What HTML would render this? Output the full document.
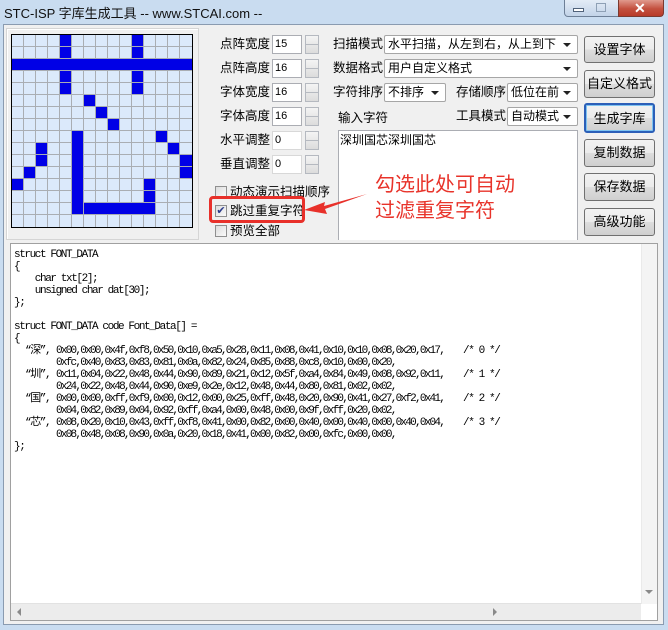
<!DOCTYPE html>
<html><head><meta charset="utf-8"><style>
*{margin:0;padding:0;box-sizing:border-box}
body{width:668px;height:630px;overflow:hidden;background:#c9dcf0;font-family:"Liberation Sans","Noto Sans CJK SC",sans-serif;font-size:12px;color:#000;position:relative}
.a{position:absolute}
.title{left:4px;top:3px;font-size:13px;color:#111}
.client{left:3px;top:24px;width:661px;height:601px;background:#f0f0f0;border:1px solid #8a9bb0}
.lbl{position:absolute;font-size:12.5px;white-space:nowrap;line-height:18px}
.inp{position:absolute;background:#fff;border:1px solid #abadb3;font-size:11px;padding-left:2px;line-height:16px;height:19px}
.spin{position:absolute;width:14px;height:19px;border:1px solid #b5b9c0;background:linear-gradient(#f4f4f4,#dcdcdc)}
.spin:after{content:"";position:absolute;left:0;right:0;top:8px;border-top:1px solid #b5b9c0}
.combo{position:absolute;background:#fff;border:1px solid #a6a6a6;height:19px;font-size:12px;line-height:17px;padding-left:3px;white-space:nowrap;border-radius:2px;overflow:hidden}
.combo:after{content:"";position:absolute;right:6px;top:7px;border-left:4px solid transparent;border-right:4px solid transparent;border-top:4px solid #222}
.btn{position:absolute;left:584px;width:71px;border:1px solid #707070;border-radius:3px;background:linear-gradient(#f2f2f2 0,#ebebeb 50%,#dddddd 51%,#cfcfcf 100%);font-size:13px;text-align:center}
.cb{position:absolute;width:12px;height:12px;border:1px solid #8f8f8f;background:linear-gradient(135deg,#dcdcdc,#fafafa)}
.code{left:10px;top:243px;width:648px;height:378px;background:#fff;border:1px solid #a0a0a0;overflow:hidden}
.ln{position:absolute;white-space:pre;font-family:"Liberation Mono","Noto Sans CJK SC",monospace;font-size:11px;line-height:12px;letter-spacing:-1.4px}
.hx{letter-spacing:-1.75px}
</style></head><body>
<div class="a title">STC-ISP 字库生成工具 -- www.STCAI.com --</div>
<div class="a" style="left:564px;top:0;width:55px;height:17px;border:1px solid #6d7f96;border-top:none;border-radius:0 0 0 4px;background:linear-gradient(#e3ecf6,#c2d3e8)"></div>
<div class="a" style="left:573px;top:8px;width:11px;height:4px;background:#fff;border:1px solid #50627a"></div>
<div class="a" style="left:596px;top:3px;width:10px;height:9px;border:1px solid #8ea0b5"></div>
<div class="a" style="left:618px;top:0;width:46px;height:17px;border:1px solid #7a3a30;border-top:none;border-radius:0 0 4px 0;background:linear-gradient(#e09a8e,#c3503e 55%,#b83a28)"></div>
<div class="a" style="left:634px;top:0px;color:#fff;font-weight:bold;font-size:14px">✕</div>
<div class="a client"></div>
<div class="a" style="left:6px;top:28px;width:193px;height:212px;border:1px solid #d5d5d5;box-shadow:inset 1px 1px 0 #fff"></div>
<svg class="a" style="left:11px;top:34px" width="182" height="194">
<rect x="0.5" y="0.5" width="181" height="193" fill="#dbe9fb" stroke="#000"/>
<g stroke="#a9adb3" stroke-width="1">
<path d="M12.5 1V193M24.5 1V193M36.5 1V193M48.5 1V193M60.5 1V193M72.5 1V193M84.5 1V193M96.5 1V193M108.5 1V193M120.5 1V193M132.5 1V193M144.5 1V193M156.5 1V193M168.5 1V193"/>
<path d="M1 12.5H181M1 24.5H181M1 36.5H181M1 48.5H181M1 60.5H181M1 72.5H181M1 84.5H181M1 96.5H181M1 108.5H181M1 120.5H181M1 132.5H181M1 144.5H181M1 156.5H181M1 168.5H181M1 180.5H181"/>
</g>
<g fill="#0000e6">
<rect x="49" y="1" width="11" height="11"/><rect x="121" y="1" width="11" height="11"/>
<rect x="49" y="13" width="11" height="11"/><rect x="121" y="13" width="11" height="11"/>
<rect x="1" y="25" width="180" height="11"/>
<rect x="49" y="37" width="11" height="11"/><rect x="121" y="37" width="11" height="11"/>
<rect x="49" y="49" width="11" height="11"/><rect x="121" y="49" width="11" height="11"/>
<rect x="73" y="61" width="11" height="11"/>
<rect x="85" y="73" width="11" height="11"/>
<rect x="97" y="85" width="11" height="11"/>
<rect x="61" y="97" width="11" height="83"/>
<rect x="145" y="97" width="11" height="11"/>
<rect x="25" y="109" width="11" height="11"/><rect x="157" y="109" width="11" height="11"/>
<rect x="25" y="121" width="11" height="11"/><rect x="169" y="121" width="12" height="11"/>
<rect x="13" y="133" width="11" height="11"/><rect x="169" y="133" width="12" height="11"/>
<rect x="1" y="145" width="11" height="11"/><rect x="133" y="145" width="11" height="11"/>
<rect x="133" y="157" width="11" height="11"/>
<rect x="73" y="169" width="71" height="11"/>
</g></svg>

<div class="lbl" style="left:220px;top:35px">点阵宽度</div><div class="inp" style="left:272px;top:35px;width:30px">15</div><div class="spin" style="left:305px;top:35px"></div>
<div class="lbl" style="left:220px;top:59px">点阵高度</div><div class="inp" style="left:272px;top:59px;width:30px">16</div><div class="spin" style="left:305px;top:59px"></div>
<div class="lbl" style="left:220px;top:83px">字体宽度</div><div class="inp" style="left:272px;top:83px;width:30px">16</div><div class="spin" style="left:305px;top:83px"></div>
<div class="lbl" style="left:220px;top:107px">字体高度</div><div class="inp" style="left:272px;top:107px;width:30px">16</div><div class="spin" style="left:305px;top:107px"></div>
<div class="lbl" style="left:220px;top:131px">水平调整</div><div class="inp" style="left:272px;top:131px;width:30px;border-color:#d8d8d8">0</div><div class="spin" style="left:305px;top:131px"></div>
<div class="lbl" style="left:220px;top:155px">垂直调整</div><div class="inp" style="left:272px;top:155px;width:30px;border-color:#d8d8d8">0</div><div class="spin" style="left:305px;top:155px"></div>

<div class="cb" style="left:215px;top:186px"></div><div class="lbl" style="left:230px;top:183px">动态演示扫描顺序</div>
<div class="cb" style="left:215px;top:205px;color:#2a3a8a;font-size:11px;line-height:10px;text-align:center">✔</div><div class="lbl" style="left:230px;top:202px">跳过重复字符</div>
<div class="cb" style="left:215px;top:225px"></div><div class="lbl" style="left:230px;top:222px">预览全部</div>
<div class="a" style="left:209px;top:196px;width:96px;height:27px;border:3px solid #e8302a;border-radius:4px"></div>

<div class="lbl" style="left:333px;top:35px">扫描模式</div><div class="combo" style="left:384px;top:35px;width:194px;padding-right:18px">水平扫描，从左到右，从上到下</div>
<div class="lbl" style="left:333px;top:59px">数据格式</div><div class="combo" style="left:384px;top:59px;width:194px">用户自定义格式</div>
<div class="lbl" style="left:333px;top:83px">字符排序</div><div class="combo" style="left:384px;top:83px;width:62px">不排序</div>
<div class="lbl" style="left:456px;top:83px">存储顺序</div><div class="combo" style="left:507px;top:83px;width:71px">低位在前</div>
<div class="lbl" style="left:338px;top:109px">输入字符</div>
<div class="lbl" style="left:456px;top:107px">工具模式</div><div class="combo" style="left:507px;top:107px;width:71px">自动模式</div>
<div class="a" style="left:338px;top:130px;width:240px;height:110px;background:#fff;border:1px solid #abadb3;border-bottom:none"></div>
<div class="lbl" style="left:340px;top:131px;font-size:12px">深圳国芯深圳国芯</div>

<div class="lbl" style="left:375px;top:173px;font-size:20px;line-height:24px;color:#e8332a">勾选此处可自动</div>
<div class="lbl" style="left:375px;top:199px;font-size:20px;line-height:24px;color:#e8332a">过滤重复字符</div>
<svg class="a" style="left:300px;top:185px" width="80" height="40"><path d="M67 9 L24 21 L25 17 L4 25 L27 29 L25 24 Z" fill="#e8302a"/></svg>

<div class="btn" style="top:36px;height:27px;line-height:25px">设置字体</div>
<div class="btn" style="top:70px;height:28px;line-height:26px">自定义格式</div>
<div class="btn" style="top:103px;height:30px;line-height:28px;border:2px solid #2b5fb8;box-shadow:inset 0 0 0 1px #7ec3f0">生成字库</div>
<div class="btn" style="top:139px;height:28px;line-height:26px">复制数据</div>
<div class="btn" style="top:173px;height:28px;line-height:26px">保存数据</div>
<div class="btn" style="top:208px;height:28px;line-height:26px">高级功能</div>

<div class="a code">
<div class="ln" style="left:3px;top:5px">struct FONT_DATA</div>
<div class="ln" style="left:3px;top:17px">{</div>
<div class="ln" style="left:3px;top:29px">    char txt[2];</div>
<div class="ln" style="left:3px;top:41px">    unsigned char dat[30];</div>
<div class="ln" style="left:3px;top:53px">};</div>
<div class="ln" style="left:3px;top:77px">struct FONT_DATA code Font_Data[] =</div>
<div class="ln" style="left:3px;top:89px">{</div>
<div class="ln" style="left:14px;top:101px">“深”,</div><div class="ln hx" style="left:45px;top:101px">0x00,0x00,0x4f,0xf8,0x50,0x10,0xa5,0x28,0x11,0x08,0x41,0x10,0x10,0x08,0x20,0x17,</div><div class="ln" style="left:452px;top:101px">/* 0 */</div>
<div class="ln hx" style="left:45px;top:113px">0xfc,0x40,0x83,0x83,0x81,0x0a,0x82,0x24,0x85,0x88,0xc8,0x10,0x00,0x20,</div>
<div class="ln" style="left:14px;top:125px">“圳”,</div><div class="ln hx" style="left:45px;top:125px">0x11,0x04,0x22,0x48,0x44,0x90,0x89,0x21,0x12,0x5f,0xa4,0x84,0x49,0x08,0x92,0x11,</div><div class="ln" style="left:452px;top:125px">/* 1 */</div>
<div class="ln hx" style="left:45px;top:137px">0x24,0x22,0x48,0x44,0x90,0xe9,0x2e,0x12,0x48,0x44,0x80,0x81,0x02,0x02,</div>
<div class="ln" style="left:14px;top:149px">“国”,</div><div class="ln hx" style="left:45px;top:149px">0x00,0x00,0xff,0xf9,0x00,0x12,0x00,0x25,0xff,0x48,0x20,0x90,0x41,0x27,0xf2,0x41,</div><div class="ln" style="left:452px;top:149px">/* 2 */</div>
<div class="ln hx" style="left:45px;top:161px">0x04,0x82,0x89,0x04,0x92,0xff,0xa4,0x00,0x48,0x00,0x9f,0xff,0x20,0x02,</div>
<div class="ln" style="left:14px;top:173px">“芯”,</div><div class="ln hx" style="left:45px;top:173px">0x08,0x20,0x10,0x43,0xff,0xf8,0x41,0x00,0x82,0x00,0x40,0x00,0x40,0x00,0x40,0x04,</div><div class="ln" style="left:452px;top:173px">/* 3 */</div>
<div class="ln hx" style="left:45px;top:185px">0x08,0x48,0x08,0x90,0x0a,0x20,0x18,0x41,0x00,0x82,0x00,0xfc,0x00,0x00,</div>
<div class="ln" style="left:3px;top:197px">};</div>
<div class="a" style="left:630px;top:0;width:17px;height:360px;background:#f4f4f4;border-left:1px solid #eaeaea"></div>
<div class="a" style="left:634px;top:346px;border-left:4px solid transparent;border-right:4px solid transparent;border-top:4px solid #8a8a8a"></div>
<div class="a" style="left:0;top:359px;width:630px;height:17px;background:#ececec;border-top:1px solid #e2e2e2"></div>
<div class="a" style="left:6px;top:364px;border-top:4px solid transparent;border-bottom:4px solid transparent;border-right:4px solid #8a8a8a"></div>
<div class="a" style="left:482px;top:364px;border-top:4px solid transparent;border-bottom:4px solid transparent;border-left:4px solid #8a8a8a"></div>
</div>
</body></html>
